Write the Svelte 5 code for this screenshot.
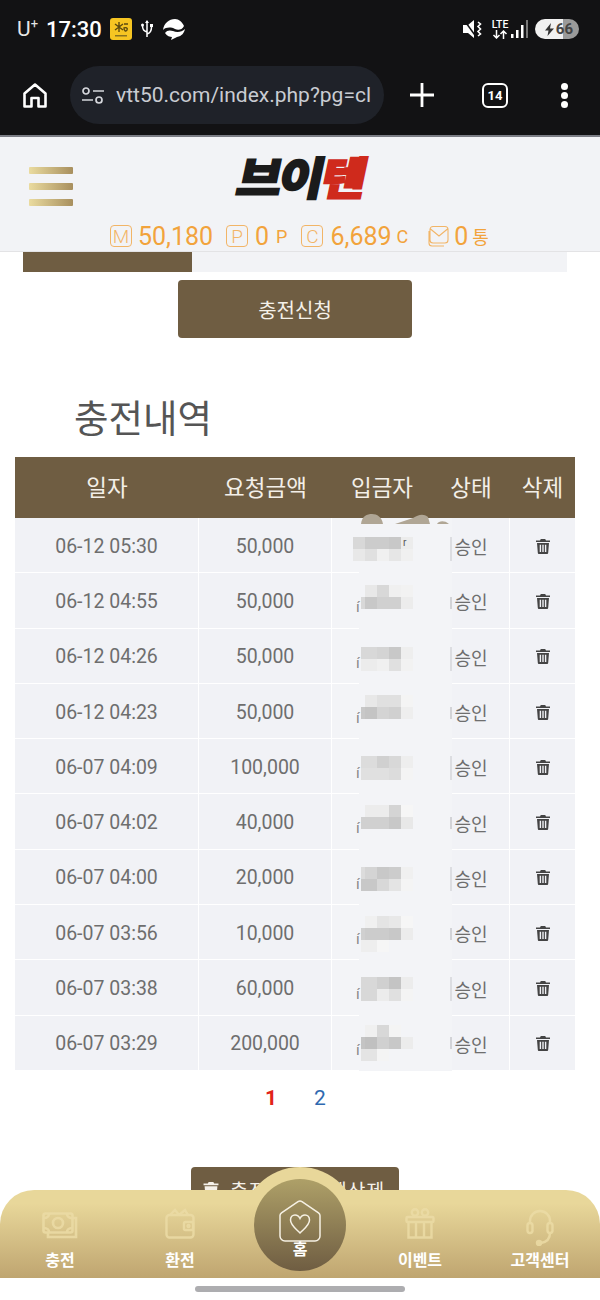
<script>
  // gray levels for the pixelated depositor names, 0 = no block
  const rows = [
    { date: '06-12 05:30', amount: '50,000', top: 19, half: false, blocks: [['d8','d8','cc','cc','c8','ec'], ['e8','e8','e0','f0','e6','f0']] },
    { date: '06-12 04:55', amount: '50,000', top: 12, half: true, blocks: [[0,0,'e8','d8','f0','f2'], [0,'d8','c8','d0','d0','ec']] },
    { date: '06-12 04:26', amount: '50,000', top: 18, half: false, blocks: [[0,'d8','d8','d4','c8','ee'], [0,'ec','ec','f0','e0','f2']] },
    { date: '06-12 04:23', amount: '50,000', top: 11, half: true, blocks: [[0,0,'e8','e0','e0','f4'], [0,'c8','c4','d4','d0','ee']] },
    { date: '06-07 04:09', amount: '100,000', top: 17, half: false, blocks: [[0,'dc','dc','d0','d8','ee'], [0,'e0','e0','e0','dc','f4']] },
    { date: '06-07 04:02', amount: '40,000', top: 11, half: true, blocks: [[0,0,'ec','ec','d4','f6'], [0,'d0','d0','d0','c8','e8']] },
    { date: '06-07 04:00', amount: '20,000', top: 17, half: false, blocks: [[0,'dc','d4','c8','cc','f0'], [0,'c8','c8','d8','e4','f4']] },
    { date: '06-07 03:56', amount: '10,000', top: 11, half: true, blocks: [[0,0,'f0','e4','e8','f6'], [0,'d0','cc','cc','c8','ec'], [0,'ee','ee','f6',0,0]] },
    { date: '06-07 03:38', amount: '60,000', top: 17, half: false, blocks: [[0,'d8','d8','d0','c4','ec'], [0,'d8','d8','ec','e0','f4']] },
    { date: '06-07 03:29', amount: '200,000', top: 9, half: true, blocks: [[0,0,'f0','d8','f4',0], [0,'c4','c0','d0','c8','ec'], [0,'e4','e4','f4',0,0]] }
  ];
</script>

<div class="screen">
  <div class="phone-top">
    <div class="status">
      <span class="carrier">U<sup>+</sup></span>
      <span class="clock">17:30</span>
      <span class="kb-icon">
        <svg width="22" height="22" viewBox="0 0 22 22"><rect width="22" height="22" rx="3" fill="#f6c522"/><path d="M9 4v10M5 6l8 6M13 6L5 12M14 6h4M14 10c2-1 4 0 3 2s-3 1-3-2z" stroke="#5b4a10" stroke-width="1.400" fill="none"/><rect x="5" y="17" width="12" height="1.500" fill="#8a7420"/></svg>
      </span>
      <svg class="usb" width="12" height="18" viewBox="0 0 12 18"><path d="M6 17V1M6 12C2 11 1.500 9 1.500 6M6 14c4-1 4.500-4 4.500-7" stroke="#fff" stroke-width="1.500" fill="none"/><path d="M6 0l2 3H4z" fill="#fff"/><rect x="9" y="4" width="3" height="3" fill="#fff"/><circle cx="1.500" cy="5" r="1.500" fill="#fff"/></svg>
      <svg class="cloud" width="22" height="21" viewBox="0 0 22 21"><path d="M12 0C6 0 1 4 0 11c3-3 8-3 12-1 3 1.500 7 1 9-3-2-4-5-7-9-7zM22 10c-3 3-8 4-12 2-3-1-6-1-8 2 2 3 5 4 7 4l-1 3 6-3c5-1 7-4 8-8z" fill="#fff"/></svg>
      <span class="spacer"></span>
      <svg class="mute" width="21" height="18" viewBox="0 0 21 18"><path d="M0 5h5l6-5v18l-6-5H0z" fill="#fff"/><path d="M1 0l13 18" stroke="#121214" stroke-width="1.500"/><path d="M15 2l2.500 2-2.500 2.500 2.500 2.500-2.500 2.500 2.500 2.500-2.500 2" stroke="#fff" stroke-width="1.600" fill="none"/></svg>
      <span class="lte">
        LTE
        <svg width="16" height="9" viewBox="0 0 16 9"><path d="M4.500 0v8M1.500 5l3 3 3-3M11.500 9V1M8.500 4l3-3 3 3" stroke="#fff" stroke-width="1.500" fill="none"/></svg>
      </span>
      <svg class="signal" width="18" height="18" viewBox="0 0 18 18"><rect x="0" y="14" width="2.500" height="4" fill="#fff"/><rect x="5" y="10" width="2.500" height="8" fill="#fff"/><rect x="10" y="5" width="2.500" height="13" fill="#fff"/><rect x="15" y="0" width="2" height="18" fill="#777"/></svg>
      <span class="battery">
        <svg width="9" height="13" viewBox="0 0 9 13"><path d="M6 0L0 7.500h3.500L2.500 13 9 5.500H5z" fill="#333"/></svg>
        66
      </span>
    </div>
    <div class="browser">
      <svg class="b-home" width="24" height="25" viewBox="0 0 24 25"><path d="M1.500 10.500L12 1.500l10.500 9V23.500H15.500V15h-7v8.500H1.500z" fill="none" stroke="#fff" stroke-width="2.600" stroke-linejoin="round"/></svg>
      <div class="url">
        <svg width="22" height="17" viewBox="0 0 22 17"><circle cx="4" cy="4" r="3" fill="none" stroke="#d5d7dc" stroke-width="1.700"/><path d="M11 4h11M0 13h11" stroke="#d5d7dc" stroke-width="1.700"/><circle cx="17" cy="13" r="3" fill="none" stroke="#d5d7dc" stroke-width="1.700"/></svg>
        <span class="url-text">vtt50.com/index.php?pg=cl</span>
      </div>
      <svg class="plus" width="24" height="24" viewBox="0 0 24 24"><path d="M12 0v24M0 12h24" stroke="#fff" stroke-width="2.800"/></svg>
      <span class="tabs">14</span>
      <span class="dots"><i></i><i></i><i></i></span>
    </div>
  </div>

  <header class="site-head">
    <div class="head-main">
      <div class="burger"><i></i><i></i><i></i></div>
      <div class="logo">브이<span>텐</span></div>
    </div>
    <div class="wallet">
      <span class="tile">M</span><b class="num w74">50,180</b>
      <span class="tile t2">P</span><b class="num">0</b><small>P</small>
      <span class="tile t3">C</span><b class="num">6,689</b><small class="c">C</small>
      <svg class="mail" width="22" height="22" viewBox="0 0 22 22"><path d="M5 1.500h12a3 3 0 0 1 3 3V15a3 3 0 0 1-3 3H5a3 3 0 0 1-3-3V4.500a3 3 0 0 1 3-3zM2.500 4l8.500 7 8.500-7M1 6v12a3 3 0 0 0 3 3h12" fill="none" stroke="#f2b567" stroke-width="1.100"/></svg>
      <b class="num">0</b><small class="kr">통</small>
    </div>
  </header>

  <main>
    <div class="progress"><div class="fill"></div></div>
    <button class="apply">충전신청</button>
    <h2>충전내역</h2>

    <div class="table-wrap">
      <table>
        <colgroup>
          <col class="c1" /><col class="c2" /><col class="c3" /><col class="c4" /><col class="c5" />
        </colgroup>
        <thead>
          <tr><th>일자</th><th>요청금액</th><th>입금자</th><th>상태</th><th>삭제</th></tr>
        </thead>
        <tbody>
          {#each rows as row, i}
            <tr>
              <td>{row.date}</td>
              <td>{row.amount}</td>
              <td class="name">
                <div class="mosaic" style="top:{row.top}px">
                  {#each row.blocks as line}
                    {#each line as g}
                      <i style="background:{g ? '#' + g + g + g : 'transparent'}"></i>
                    {/each}
                  {/each}
                </div>
                {#if i === 0}
                  <span class="leftover end">r</span>
                {:else}
                  <span class="leftover">í</span>
                {/if}
              </td>
              <td class="state">
                <i class="stripe" class:half={row.half} style="top:{row.top}px"></i>
                승인
              </td>
              <td>
                <svg class="trash" width="14" height="15" viewBox="0 0 14 15"><path d="M4.800 0h4.400l.8 1.500H14V3H0V1.500h4zM1 4h12l-.8 9.700c0 .8-.6 1.300-1.300 1.300H3.100c-.7 0-1.300-.5-1.300-1.300zm2.700 1.800v7.200h1.400V5.800zm2.600 0v7.200h1.400V5.800zm2.600 0v7.200h1.400V5.800z" fill="#444" fill-rule="evenodd"/></svg>
              </td>
            </tr>
          {/each}
        </tbody>
      </table>
      <svg class="smudge" width="90" height="12" viewBox="0 0 90 12"><path d="M0 11C1 3 6 1 11 1s10 3 11 10zM34 11l18-6c5-3 10-5 15-1l2 7zM76 11c2-3 7-4 12 0z" fill="#b0a695"/></svg>
    </div>

    <nav class="pager"><b>1</b><a href="#p2">2</a></nav>

    <button class="wipe">
      <svg width="16" height="16" viewBox="0 0 14 15"><path d="M4.800 0h4.400l.8 1.500H14V3H0V1.500h4zM1 4h12l-.8 9.700c0 .8-.6 1.300-1.300 1.300H3.100c-.7 0-1.300-.5-1.300-1.300z" fill="#f5f1ea"/></svg>
      충전내역 전체삭제
    </button>
  </main>

  <footer>
    <div class="bottom-nav">
      <div class="nav-item cash">
        <svg width="36" height="27" viewBox="0 0 36 27" fill="none" stroke="#ecdca6" stroke-width="2.600"><rect x="1.500" y="1.500" width="29" height="19" rx="2"/><path d="M30 6h4v19H6v-4"/><circle cx="16" cy="11" r="5"/><path d="M2 6c3 0 5-2 5-4M30 6c-3 0-5-2-5-4M2 16c3 0 5 2 5 4M30 16c-3 0-5 2-5 4"/></svg>
        <span>충전</span>
      </div>
      <div class="nav-item">
        <svg width="30" height="31" viewBox="0 0 30 31" fill="none" stroke="#ecdca6" stroke-width="2.400"><rect x="1.500" y="7" width="27" height="22.500" rx="3"/><path d="M5 7l5-5 4 5M14 7l6-5 3 5"/><rect x="19" y="14" width="9" height="8" rx="1.500"/><circle cx="23.500" cy="18" r="1"/></svg>
        <span>환전</span>
      </div>
      <div class="nav-item"></div>
      <div class="nav-item">
        <svg width="30" height="31" viewBox="0 0 30 31" fill="none" stroke="#ecdca6" stroke-width="2.400"><rect x="1.500" y="9" width="27" height="5" rx="1"/><path d="M3.500 14v15.500h23V14M11 14v15.500M19 14v15.500"/><circle cx="10" cy="4.500" r="3.200"/><circle cx="20" cy="4.500" r="3.200"/></svg>
        <span>이벤트</span>
      </div>
      <div class="nav-item">
        <svg width="28" height="38" viewBox="0 0 28 38" fill="none" stroke="#ecdca6" stroke-width="2.400"><path d="M4 16v-3a10 10 0 0 1 20 0v3"/><rect x="1.500" y="15" width="5" height="10" rx="2.500"/><rect x="21.500" y="15" width="5" height="10" rx="2.500"/><path d="M24 25c0 5-3 9-9 10"/><circle cx="13" cy="35" r="2" fill="#ecdca6"/></svg>
        <span>고객센터</span>
      </div>
      <div class="home-ring"></div>
      <div class="home-disc">
        <svg width="42" height="42" viewBox="0 0 42 42" fill="none" stroke="#f6f1e4" stroke-width="1.500"><path d="M1 15.500c0-1.200.5-2 1.500-2.700L19 1.600c1.300-.8 2.700-.8 4 0l16.500 11.200c1 .7 1.500 1.500 1.500 2.700V36a5 5 0 0 1-5 5H6a5 5 0 0 1-5-5z"/><path d="M21 33c-5-5-9.500-8-9.500-13 0-3 2-5 4.500-5 2.200 0 4 1.300 5 3.500 1-2.200 2.800-3.500 5-3.500 2.500 0 4.500 2 4.500 5 0 5-4.500 8-9.500 13z"/></svg>
        <span>홈</span>
      </div>
    </div>
    <div class="gesture"><i></i></div>
  </footer>
</div>

<style>
  :global(body) {
    margin: 0;
    background: #fff;
  }

  .screen {
    position: relative;
    width: 600px;
    height: 1300px;
    overflow: hidden;
    font-family: "Noto Sans CJK KR", "Noto Sans", sans-serif;
    background: #fff;
  }

  /* phone chrome */
  .phone-top {
    height: 135px;
    background: #121214;
    border-bottom: 2px solid #7b7d85;
    color: #fff;
    font-family: Roboto, "Noto Sans", sans-serif;
  }

  .status {
    display: flex;
    align-items: center;
    height: 58px;
    padding: 0 21px 0 17px;
  }

  .carrier {
    font-size: 21px;
    color: #e6e6e6;
    width: 29px;
  }

  .carrier sup {
    font-size: 13px;
    line-height: 0;
  }

  .clock {
    font-size: 22px;
    font-weight: 500;
    width: 64px;
  }

  .kb-icon {
    display: flex;
    margin-right: 9px;
  }

  .usb {
    margin-right: 10px;
  }

  .spacer {
    flex: 1;
  }

  .mute {
    margin-right: 7px;
  }

  .lte {
    display: flex;
    flex-direction: column;
    align-items: center;
    width: 18px;
    margin-right: 2px;
    font-size: 10.500px;
    line-height: 11px;
    font-weight: 500;
  }

  .signal {
    margin-right: 6px;
  }

  .battery {
    display: flex;
    align-items: center;
    justify-content: flex-end;
    gap: 2px;
    width: 44px;
    height: 20px;
    padding-right: 6px;
    box-sizing: border-box;
    border-radius: 10px;
    background: linear-gradient(90deg, #f1f1f1 64%, #9a9a9a 64%);
    color: #444;
    font-size: 15px;
    font-weight: 700;
  }

  .browser {
    display: flex;
    align-items: center;
    height: 58px;
    margin-top: 8px;
    padding-left: 23px;
  }

  .url {
    display: flex;
    align-items: center;
    gap: 12px;
    box-sizing: border-box;
    width: 314px;
    height: 58px;
    margin-left: 23px;
    padding: 0 0 0 12px;
    border-radius: 29px;
    background: #1f2229;
  }

  .url svg {
    flex: none;
  }

  .url-text {
    white-space: nowrap;
    font-size: 21px;
    color: #c9ccd2;
  }

  .plus {
    margin-left: 26px;
  }

  .tabs {
    display: flex;
    align-items: center;
    justify-content: center;
    box-sizing: border-box;
    width: 26px;
    height: 25px;
    margin-left: 48px;
    border: 2.500px solid #fff;
    border-radius: 6px;
    font-size: 13px;
    font-weight: 700;
  }

  .dots {
    display: flex;
    flex-direction: column;
    gap: 2px;
    margin-left: 53px;
  }

  .dots i {
    width: 7px;
    height: 7px;
    border-radius: 50%;
    background: #fff;
  }

  /* site header */
  .site-head {
    height: 115px;
    background: #f2f3f6;
    border-bottom: 1px solid #e3e3e5;
    box-sizing: border-box;
  }

  .head-main {
    position: relative;
    display: flex;
    justify-content: center;
    height: 84px;
  }

  .burger {
    position: absolute;
    left: 29px;
    top: 30px;
    display: flex;
    flex-direction: column;
    gap: 9px;
  }

  .burger i {
    display: block;
    width: 44px;
    height: 7px;
    border-radius: 1px;
    background: linear-gradient(90deg, #eadb9f, #a88f5e);
  }

  .logo {
    margin-top: 9px;
    margin-left: -3px;
    font-size: 49px;
    line-height: 56px;
    font-weight: 900;
    letter-spacing: -3px;
    color: #1b1b1b;
    -webkit-text-stroke: 2px currentColor;
    transform: skewX(-12deg) scaleY(0.92);
    transform-origin: 50% 60%;
  }

  .logo span {
    color: #cf2a1c;
  }

  .wallet {
    display: flex;
    align-items: center;
    height: 24px;
    padding-left: 110px;
    margin-top: 3px;
    color: #f2a33c;
    font-family: Roboto, sans-serif;
  }

  .tile {
    display: flex;
    align-items: center;
    justify-content: center;
    box-sizing: border-box;
    width: 22px;
    height: 22px;
    margin-right: 6px;
    border: 1px solid #f2b567;
    border-radius: 4px;
    font-size: 19px;
    font-weight: 300;
    line-height: 1;
    color: #f2b567;
  }

  .t2 {
    margin-left: 14px;
    margin-right: 7px;
  }

  .t3 {
    margin-left: 14px;
    margin-right: 7px;
  }

  .num {
    font-size: 25px;
    font-weight: 400;
  }

  .w74 {
    width: 74px;
  }

  small {
    font-size: 18px;
    margin-left: 7px;
  }

  small.c {
    margin-left: 5px;
  }

  .mail {
    margin-left: 20px;
    margin-right: 4px;
  }

  small.kr {
    margin-left: 4px;
    font-family: "Noto Sans CJK KR", sans-serif;
  }

  /* content */
  main {
    display: flex;
    flex-direction: column;
  }

  .progress {
    height: 20px;
    margin: 0 33px 0 23px;
    background: #f2f3f6;
  }

  .fill {
    width: 169px;
    height: 100%;
    background: #6f5d42;
  }

  button {
    border: 0;
    border-radius: 4px;
    background: #6f5d42;
    color: #f5f1ea;
    font-family: inherit;
  }

  .apply {
    align-self: flex-start;
    width: 234px;
    height: 58px;
    margin: 8px 0 0 178px;
    font-size: 20px;
  }

  h2 {
    margin: 52px 0 0 74px;
    height: 67px;
    font-size: 37.500px;
    line-height: 52px;
    font-weight: 400;
    color: #555;
  }

  .table-wrap {
    position: relative;
    margin-left: 15px;
    width: 560px;
  }

  table {
    width: 560px;
    table-layout: fixed;
    border-collapse: separate;
    border-spacing: 0;
  }

  .c1 { width: 184px; }
  .c2 { width: 133px; }
  .c3 { width: 100px; }
  .c4 { width: 78px; }
  .c5 { width: 65px; }

  th {
    box-sizing: border-box;
    height: 61px;
    padding: 0 0 3px;
    background: #6f5d42;
    color: #f3efe8;
    font-size: 22.500px;
    font-weight: 400;
  }

  td {
    position: relative;
    box-sizing: border-box;
    height: 55.300px;
    padding: 2px 0 0;
    text-align: center;
    background: #f1f2f6;
    border-right: 1px solid #fff;
    border-bottom: 1px solid #fff;
    color: #6e6e6e;
    font-family: Roboto, "Noto Sans CJK KR", sans-serif;
    font-size: 19.500px;
  }

  td:last-child {
    border-right: 0;
  }

  .name {
    background: #f3f4f7;
    border-right: 0;
    border-bottom: 0;
  }

  .name::after {
    content: "";
    position: absolute;
    left: 0;
    bottom: 0;
    width: 27px;
    height: 1px;
    background: #fff;
  }

  .mosaic {
    position: absolute;
    left: 21px;
    display: grid;
    grid-template-columns: 8px 4px 12px 12px 12px 12px;
    grid-auto-rows: 12px;
  }

  .mosaic i {
    display: block;
  }

  .leftover {
    position: absolute;
    left: 24px;
    top: 26px;
    font-size: 15px;
    line-height: 16px;
    color: #888;
  }

  .leftover.end {
    left: 71px;
    top: 17px;
    font-size: 10px;
    color: #555;
  }

  .state {
    background: linear-gradient(90deg, #f3f4f7 20px, #f1f2f6 20px);
    border-bottom-color: transparent;
    font-family: "Noto Sans CJK KR", sans-serif;
    font-size: 18px;
    line-height: 24px;
    padding-left: 1px;
  }

  .state::after {
    content: "";
    position: absolute;
    left: 20px;
    right: 0;
    bottom: -1px;
    height: 1px;
    background: #fff;
  }

  .stripe {
    position: absolute;
    left: 18px;
    width: 2px;
    height: 24px;
    background: #dcdde1;
  }

  .stripe.half {
    height: 12px;
    margin-top: 12px;
    background: #d2d3d7;
  }

  .trash {
    display: block;
    margin: 0 auto;
  }

  .smudge {
    position: absolute;
    left: 346px;
    top: 56px;
  }

  .pager {
    display: flex;
    gap: 37px;
    height: 54px;
    margin-left: 265px;
    align-items: center;
    font-family: Roboto, sans-serif;
    font-size: 21px;
  }

  .pager b {
    color: #e2231a;
  }

  .pager a {
    color: #2f69b0;
    text-decoration: none;
  }

  .wipe {
    display: flex;
    align-items: center;
    gap: 11px;
    align-self: flex-start;
    width: 208px;
    height: 46px;
    margin: 42px 0 0 191px;
    padding: 0 0 0 12px;
    font-size: 19.500px;
    letter-spacing: 0.8px;
    white-space: nowrap;
  }

  /* bottom nav sits over the page */
  footer {
    position: absolute;
    left: 0;
    right: 0;
    bottom: 0;
    background: #fff;
  }

  .bottom-nav {
    position: relative;
    display: grid;
    grid-template-columns: repeat(5, 120px);
    height: 88px;
    border-radius: 34px 34px 0 0;
    background: linear-gradient(180deg, #e8d79a 15%, #bfa570 100%);
  }

  .nav-item {
    display: flex;
    flex-direction: column;
    align-items: center;
    justify-content: flex-end;
    height: 80px;
  }

  .nav-item svg {
    margin-bottom: auto;
    margin-top: 18px;
    opacity: 0.85;
    filter: blur(0.4px);
  }

  .cash svg {
    margin-top: 22px;
  }

  .nav-item span {
    font-size: 16px;
    line-height: 22px;
    font-weight: 700;
    color: #fff;
  }

  .home-ring {
    position: absolute;
    left: 242px;
    top: -23px;
    width: 116px;
    height: 116px;
    border-radius: 50%;
    background: #e8d79a;
    clip-path: inset(0 0 78% 0);
  }

  .home-disc {
    position: absolute;
    left: 254px;
    top: -11px;
    display: flex;
    flex-direction: column;
    align-items: center;
    box-sizing: border-box;
    width: 92px;
    height: 92px;
    padding-top: 21px;
    border-radius: 50%;
    background: linear-gradient(180deg, #aea068 0%, #6f5d42 100%);
  }

  .home-disc span {
    margin-top: -4px;
    font-size: 16px;
    line-height: 20px;
    font-weight: 700;
    color: #fff;
  }

  .gesture {
    display: flex;
    justify-content: center;
    height: 22px;
    padding-top: 8px;
    box-sizing: border-box;
  }

  .gesture i {
    width: 210px;
    height: 6px;
    border-radius: 3px;
    background: #adadb0;
  }
</style>
